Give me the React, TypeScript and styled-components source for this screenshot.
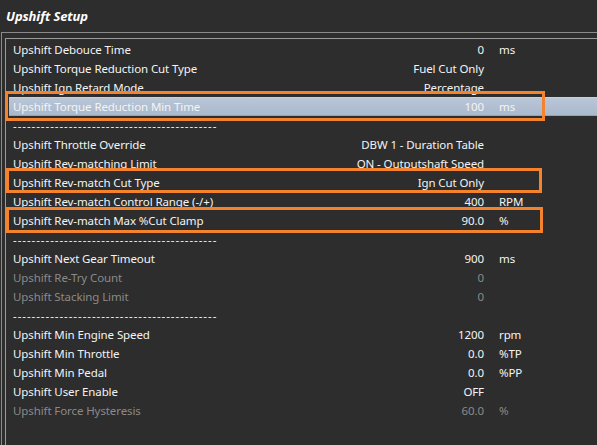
import React from "react";
import styled, { createGlobalStyle } from "styled-components";

const Global = createGlobalStyle`
  html, body { margin: 0; padding: 0; background: #2d2d2d; }
  body { font-family: "Noto Sans", "Open Sans", sans-serif; }
`;

const Page = styled.div`
  position: relative;
  width: 597px;
  height: 445px;
  background: #2d2d2d;
  overflow: hidden;
`;

const Header = styled.div`
  height: 32px;
  display: flex;
  align-items: center;
  padding-left: 6px;
  box-sizing: border-box;
`;

const Title = styled.h1`
  margin: 0;
  font-size: 13px;
  font-weight: 700;
  font-style: italic;
  color: #ffffff;
  letter-spacing: -0.1px;
`;

const Outer = styled.div`
  margin-left: 1px;
  border-left: 1px solid #8a8a8a;
  border-top: 1px solid #8a8a8a;
  padding: 5px 0 0 3px;
  height: 420px;
`;

const List = styled.div`
  border-left: 1px solid #9a9a9a;
  border-top: 1px solid #9a9a9a;
  padding: 1px 0 0 3px;
  height: 410px;
`;

const Row = styled.div<{ $dim?: boolean; $selected?: boolean }>`
  display: grid;
  grid-template-columns: 256px 200px auto;
  column-gap: 15px;
  height: 19px;
  line-height: 19px;
  padding-left: 4px;
  font-size: 11.5px;
  letter-spacing: -0.1px;
  white-space: nowrap;
  color: ${(p) => (p.$dim ? "#8a8a8a" : "#f4f4f4")};
  background: ${(p) =>
    p.$selected
      ? "linear-gradient(to bottom, #d4dde9 0px, #b9c6d7 1px, #a9b8cc 100%)"
      : "transparent"};
  box-shadow: ${(p) => (p.$selected ? "inset 0 -1px 0 #8fa3bd" : "none")};
`;

const Label = styled.span``;

const Value = styled.span`
  text-align: right;
`;

const Unit = styled.span``;

const Dashes = styled.div`
  height: 19px;
  line-height: 19px;
  padding-left: 4px;
  font-size: 11.5px;
  color: #f4f4f4;
  letter-spacing: 0.94px;
  white-space: nowrap;
`;

const Highlight = styled.div`
  position: absolute;
  border: 3px solid #f5822c;
  box-sizing: border-box;
  pointer-events: none;
`;

type Item =
  | { kind: "row"; label: string; value: string; unit?: string; dim?: boolean; selected?: boolean }
  | { kind: "sep" };

const items: Item[] = [
  { kind: "row", label: "Upshift Debouce Time", value: "0", unit: "ms" },
  { kind: "row", label: "Upshift Torque Reduction Cut Type", value: "Fuel Cut Only" },
  { kind: "row", label: "Upshift Ign Retard Mode", value: "Percentage" },
  { kind: "row", label: "Upshift Torque Reduction Min Time", value: "100", unit: "ms", selected: true },
  { kind: "sep" },
  { kind: "row", label: "Upshift Throttle Override", value: "DBW 1 - Duration Table" },
  { kind: "row", label: "Upshift Rev-matching Limit", value: "ON - Outputshaft Speed" },
  { kind: "row", label: "Upshift Rev-match Cut Type", value: "Ign Cut Only" },
  { kind: "row", label: "Upshift Rev-match Control Range (-/+)", value: "400", unit: "RPM" },
  { kind: "row", label: "Upshift Rev-match Max %Cut Clamp", value: "90.0", unit: "%" },
  { kind: "sep" },
  { kind: "row", label: "Upshift Next Gear Timeout", value: "900", unit: "ms" },
  { kind: "row", label: "Upshift Re-Try Count", value: "0", dim: true },
  { kind: "row", label: "Upshift Stacking Limit", value: "0", dim: true },
  { kind: "sep" },
  { kind: "row", label: "Upshift Min Engine Speed", value: "1200", unit: "rpm" },
  { kind: "row", label: "Upshift Min Throttle", value: "0.0", unit: "%TP" },
  { kind: "row", label: "Upshift Min Pedal", value: "0.0", unit: "%PP" },
  { kind: "row", label: "Upshift User Enable", value: "OFF" },
  { kind: "row", label: "Upshift Force Hysteresis", value: "60.0", unit: "%", dim: true },
];

const DASHES = "-".repeat(44);

const boxes = [
  { left: 5, top: 91, width: 540, height: 30 },
  { left: 6, top: 168, width: 536, height: 25 },
  { left: 6, top: 207, width: 537, height: 26 },
];

export default function App() {
  return (
    <>
      <Global />
      <Page>
        <Header>
          <Title>Upshift Setup</Title>
        </Header>
        <Outer>
          <List>
            {items.map((it, i) =>
              it.kind === "sep" ? (
                <Dashes key={i}>{DASHES}</Dashes>
              ) : (
                <Row key={i} $dim={it.dim} $selected={it.selected}>
                  <Label>{it.label}</Label>
                  <Value>{it.value}</Value>
                  <Unit>{it.unit ?? ""}</Unit>
                </Row>
              )
            )}
          </List>
        </Outer>
        {boxes.map((b, i) => (
          <Highlight
            key={i}
            style={{ left: b.left, top: b.top, width: b.width, height: b.height }}
          />
        ))}
      </Page>
    </>
  );
}
